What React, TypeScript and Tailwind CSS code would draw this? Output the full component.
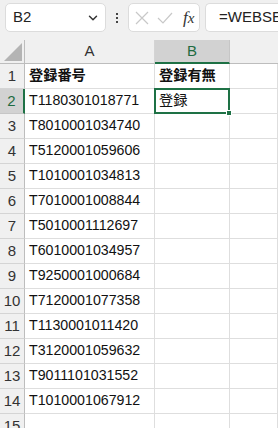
import { ChevronDown } from "lucide-react";

const numbers = [
  "T1180301018771",
  "T8010001034740",
  "T5120001059606",
  "T1010001034813",
  "T7010001008844",
  "T5010001112697",
  "T6010001034957",
  "T9250001000684",
  "T7120001077358",
  "T1130001011420",
  "T3120001059632",
  "T9011101031552",
  "T1010001067912",
];

const font = "font-['Liberation_Sans','Noto_Sans_CJK_JP',sans-serif]";

function RowHead({ n, active }: { n: number; active?: boolean }) {
  return (
    <div
      className={`flex h-[25px] items-center justify-center border-b border-r text-[15px] ${
        active
          ? "border-b-[#c6c6c6] border-r-2 border-r-[#1e7145] bg-[#d2d2d2] text-[#1e6b41]"
          : "border-b-[#d4d4d4] border-r-[#bdbdbd] bg-[#f0f0f0] text-[#333]"
      }`}
    >
      {n}
    </div>
  );
}

function Cell({ children, bold }: { children?: React.ReactNode; bold?: boolean }) {
  return (
    <div
      className={`flex h-[25px] items-center overflow-hidden whitespace-nowrap border-b border-r border-[#dedede] pl-[4px] text-[14.2px] text-[#111] ${
        bold ? "font-bold" : ""
      }`}
    >
      {children}
    </div>
  );
}

export default function App() {
  return (
    <div className={`h-[428px] w-[278px] overflow-hidden bg-white ${font}`}>
      {/* formula bar */}
      <div className="flex h-[40px] items-start overflow-hidden bg-[#f0f0f0] pt-[3px]">
        <div className="ml-[5px] flex h-[29px] w-[101px] shrink-0 items-center justify-between rounded-[5px] border border-[#dcdcdc] bg-white pl-[7px] pr-[5px] text-[15px] text-[#222]">
          <span>B2</span>
          <ChevronDown className="h-[14px] w-[14px] text-[#333]" strokeWidth={2.5} />
        </div>
        <div className="flex w-[22px] shrink-0 flex-col items-center gap-[2px] pt-[10px]">
          <span className="h-[2px] w-[2px] bg-[#444]" />
          <span className="h-[2px] w-[2px] bg-[#444]" />
          <span className="h-[2px] w-[2px] bg-[#444]" />
        </div>
        <div className="flex h-[29px] w-[72px] shrink-0 items-center rounded-[5px] border border-[#dcdcdc] bg-white pl-[5px]">
          <svg width="16" height="16" viewBox="0 0 16 16" className="text-[#c8c8c8]">
            <path d="M2 2 L14 14 M14 2 L2 14" stroke="currentColor" strokeWidth="1.2" fill="none" />
          </svg>
          <svg width="18" height="16" viewBox="0 0 18 16" className="ml-[6px] text-[#c8c8c8]">
            <path d="M2 8 L7 13 L16 3" stroke="currentColor" strokeWidth="1.2" fill="none" />
          </svg>
          <span className="ml-[9px] font-['Liberation_Serif',serif] text-[17px] italic text-[#333]">
            f<span className="text-[15px]">x</span>
          </span>
        </div>
        <div className="ml-[5px] flex h-[29px] w-[120px] shrink-0 items-center whitespace-nowrap rounded-l-[5px] border border-r-0 border-[#dcdcdc] bg-white pl-[13px] text-[15px] text-[#222]">
          =WEBSERVICE
        </div>
      </div>

      {/* grid */}
      <div className="grid grid-cols-[25px_130px_75px_1fr]">
        {/* corner */}
        <div className="flex h-[24px] items-end justify-end border-b border-r border-[#bdbdbd] bg-[#f0f0f0] pb-[2px] pr-[2px]">
          <svg width="18" height="18" viewBox="0 0 18 18">
            <path d="M18 0 L18 18 L0 18 Z" fill="#b4b4b4" />
          </svg>
        </div>
        <div className="flex h-[24px] items-center justify-center border-b border-r border-b-[#bdbdbd] border-r-[#d4d4d4] bg-[#f0f0f0] text-[15px] text-[#333]">
          A
        </div>
        <div className="flex h-[24px] items-center justify-center border-b-2 border-r border-b-[#1e7145] border-r-[#c6c6c6] bg-[#d2d2d2] text-[15px] text-[#1e6b41]">
          B
        </div>
        <div className="h-[24px] border-b border-[#bdbdbd] bg-[#f0f0f0]" />

        {/* row 1 */}
        <RowHead n={1} />
        <Cell bold>登録番号</Cell>
        <Cell bold>登録有無</Cell>
        <Cell />

        {numbers.map((num, i) => (
          <Row key={num} n={i + 2} value={num} />
        ))}

        <RowHead n={15} />
        <Cell />
        <Cell />
        <Cell />
      </div>
    </div>
  );
}

function Row({ n, value }: { n: number; value: string }) {
  const active = n === 2;
  return (
    <>
      <RowHead n={n} active={active} />
      <Cell>{value}</Cell>
      {active ? (
        <div className="relative h-[25px] border-b border-r border-[#dedede]">
          <div className="absolute -left-px -top-px z-10 flex h-[26px] w-[76px] items-center border-2 border-[#1e7145] pl-[3px] text-[14.2px] text-[#111]">
            登録
          </div>
          <div className="absolute -bottom-[3px] -right-[3px] z-20 h-[6px] w-[6px] border border-white bg-[#1e7145]" />
        </div>
      ) : (
        <Cell />
      )}
      <Cell />
    </>
  );
}
